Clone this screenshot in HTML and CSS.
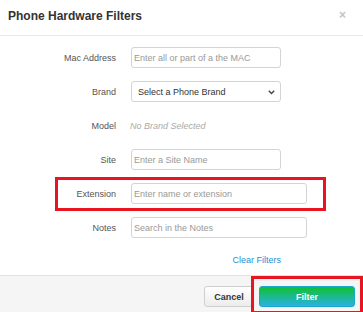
FILE: index.html
```html
<!DOCTYPE html>
<html>
<head>
<meta charset="utf-8">
<link rel="stylesheet" href="styles.css">
</head>
<body>
<div class="modal">
  <div class="modal-header">
    <h1 class="title">Phone Hardware Filters</h1>
    <span class="close">×</span>
  </div>
  <div class="modal-body">
    <div class="row">
      <label class="label">Mac Address</label>
      <div class="field short"><span class="ph">Enter all or part of a the MAC</span></div>
    </div>
    <div class="row">
      <label class="label">Brand</label>
      <div class="field short select"><span class="val">Select a Phone Brand</span>
        <svg class="chev" width="7" height="5" viewBox="0 0 7 5"><path d="M0.8 0.8 L3.5 3.6 L6.2 0.8" fill="none" stroke="#444" stroke-width="1.4"/></svg>
      </div>
    </div>
    <div class="row">
      <label class="label">Model</label>
      <div class="static">No Brand Selected</div>
    </div>
    <div class="row">
      <label class="label">Site</label>
      <div class="field short"><span class="ph">Enter a Site Name</span></div>
    </div>
    <div class="row highlight">
      <label class="label">Extension</label>
      <div class="field long"><span class="ph">Enter name or extension</span></div>
    </div>
    <div class="row">
      <label class="label">Notes</label>
      <div class="field long"><span class="ph">Search in the Notes</span></div>
    </div>
    <div class="row clear-row">
      <span class="label"></span>
      <a class="clear">Clear Filters</a>
    </div>
  </div>
  <div class="modal-footer">
    <button class="btn cancel">Cancel</button>
    <button class="btn filter">Filter</button>
  </div>
</div>
</body>
</html>
```
FILE: styles.css
```css
* { box-sizing: border-box; }
html, body { margin: 0; padding: 0; background: #fff; }
body { font-family: "Liberation Sans", Arial, sans-serif; width: 363px; height: 312px; overflow: hidden; }
.modal { width: 363px; height: 312px; display: flex; flex-direction: column; }
.modal-header {
  height: 36px;
  border-bottom: 1px solid #e8e8e8;
  padding: 9px 8px 0 8px;
  display: flex;
  justify-content: space-between;
  align-items: flex-start;
}
.title { margin: 0; font-size: 12px; line-height: 15px; font-weight: bold; color: #333; }
.close { font-size: 12px; line-height: 12px; color: #c4c4c4; font-weight: bold; margin-right: 9px; margin-top: 0; }
.modal-body {
  flex: 1;
  padding-top: 11px;
  display: flex;
  flex-direction: column;
  gap: 13px;
}
.row { display: flex; align-items: center; height: 21px; position: relative; }
.label { width: 116px; text-align: right; font-size: 9px; color: #555; margin-right: 15px; flex: none; }
.field {
  height: 21px;
  border: 1px solid #d4d4d4;
  border-radius: 3px;
  display: flex;
  align-items: center;
  padding: 0 2px;
  font-size: 9px;
  background: #fff;
}
.short { width: 150px; }
.long { width: 176px; }
.ph { color: #999; white-space: nowrap; }
.select { padding: 0 5px 0 6px; justify-content: space-between; }
.val { color: #333; }
.chev { margin-top: 1px; }
.static { font-size: 9px; font-style: italic; color: #aaa; margin-left: -1px; }
.highlight::after {
  content: "";
  position: absolute;
  left: 55px;
  width: 265px;
  top: -6px;
  bottom: -7px;
  border: 3px solid #e8141f;
}
.clear-row { margin-top: -2px; }
.clear { width: 150px; text-align: right; font-size: 9px; color: #1e8fd5; }
.modal-footer {
  height: 37px;
  background: #f5f5f5;
  border-top: 1px solid #e2e2e2;
  display: flex;
  justify-content: flex-end;
  align-items: flex-start;
  padding: 10px 8px 0 0;
  gap: 5px;
}
.btn { height: 21px; font-family: "Liberation Sans", Arial, sans-serif; font-size: 9px; font-weight: bold; border-radius: 3px; padding: 0; }
.cancel { width: 50px; background: linear-gradient(#fff, #ececec); border: 1px solid #cfcfcf; color: #333; }
.filter {
  width: 96px;
  border: 1px solid #1aa8c8;
  color: #fff;
  background: linear-gradient(#0fc030, #28b2e6);
  position: relative;
}
.filter::after {
  content: "";
  position: absolute;
  left: -9px;
  right: -9px;
  top: -11px;
  bottom: -8px;
  border: 3px solid #e8141f;
}
```
